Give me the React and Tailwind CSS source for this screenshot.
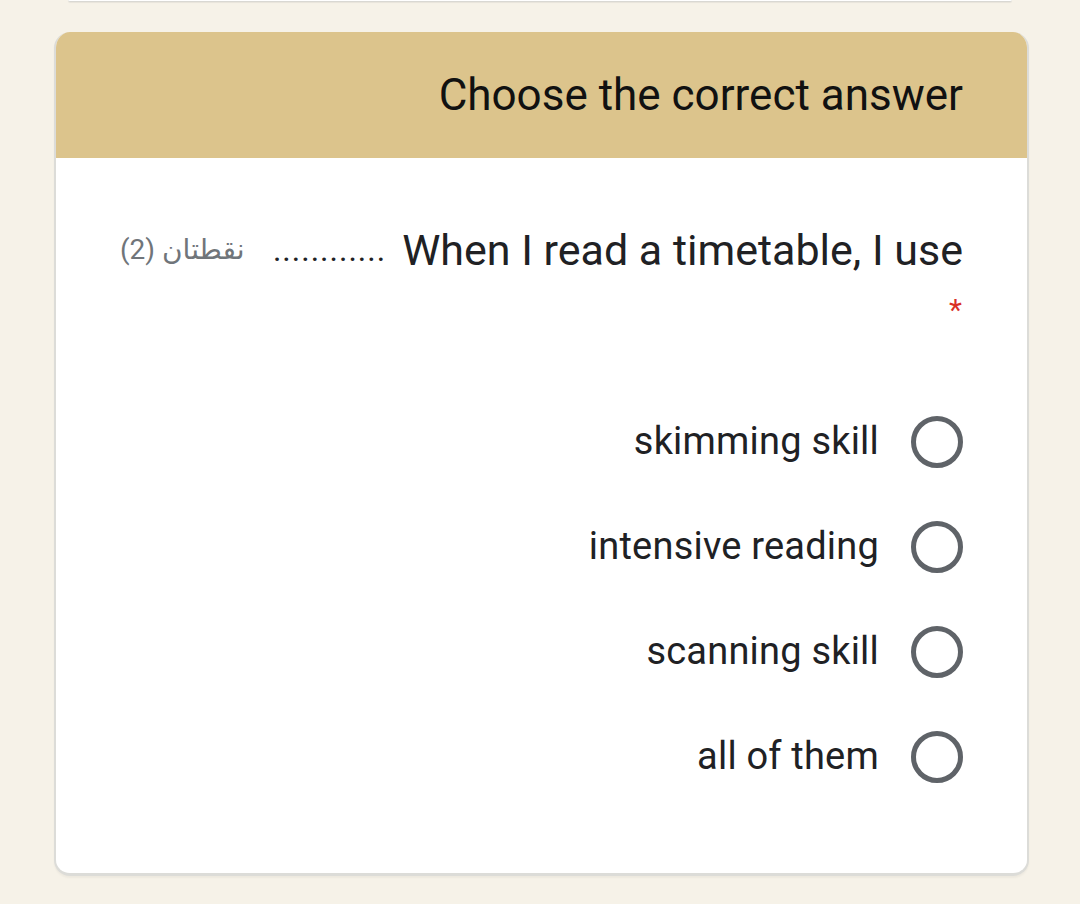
import React from 'react';

const options = ['skimming skill', 'intensive reading', 'scanning skill', 'all of them'];

function Radio() {
  return (
    <span className="block w-[52px] h-[52px] rounded-full border-[5px] border-[#5f6368] shrink-0" />
  );
}

function App() {
  return (
    <div className="min-h-[904px] w-[1080px] bg-[#f6f2e8] relative" style={{ fontFamily: 'Roboto, "Noto Sans", sans-serif' }}>
      {/* previous card edge */}
      <div className="mx-auto w-[944px] h-[2px] bg-white rounded-b-lg border-b border-[#d9d8d3] shadow-[0_1px_1px_rgba(0,0,0,0.06)]" />

      <div className="pt-[30px] pl-[54px] pr-[51px]">
        <div className="rounded-[16px] overflow-hidden border-x-2 border-b-[3px] border-[#dcdcd8] bg-white shadow-[0_2px_2px_rgba(0,0,0,0.04)]">
          {/* header */}
          <div className="bg-[#dcc48c] h-[126px] -mx-[2px] flex items-start justify-end pr-[66px] pt-[37px]">
            <h1 className="text-[44px] leading-[52px] text-[#111]">Choose the correct answer</h1>
          </div>

          {/* question */}
          <div className="pl-[64px] pr-[64px] pt-[66px] pb-[64px]">
            <div className="flex items-start justify-between">
              <span className="text-[28px] leading-[52px] text-[#70757a]" style={{ fontFamily: 'Roboto, "Noto Sans", "DejaVu Sans", sans-serif' }}>
                <span dir="rtl">نقطتان (2)</span>
              </span>
              <div className="flex items-start gap-[16px]">
                <span className="text-[32px] leading-[52px] text-[#202124] tracking-[1px]">............</span>
                <span className="text-[43px] leading-[52px] text-[#202124]">When I read a timetable, I use</span>
              </div>
            </div>
            <div className="flex justify-end pr-[1px] h-[44px] mt-[12px]">
              <span className="text-[30px] leading-[44px] text-[#d93025]">*</span>
            </div>

            <div className="mt-[57px] flex flex-col">
              {options.map((o) => (
                <label key={o} className="h-[105px] flex items-center justify-end gap-[32px]">
                  <span className="text-[38px] text-[#202124] tracking-[0.2px]">{o}</span>
                  <Radio />
                </label>
              ))}
            </div>
          </div>
        </div>
      </div>
    </div>
  );
}

export default App;
